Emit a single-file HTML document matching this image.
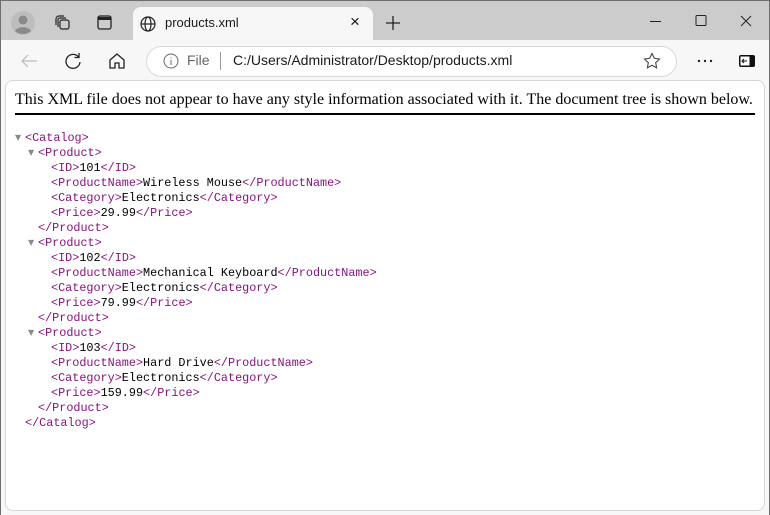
<!DOCTYPE html>
<html><head><meta charset="utf-8"><style>
*{margin:0;padding:0;box-sizing:border-box}
html,body{width:770px;height:515px;overflow:hidden}
body{background:#ccc;position:relative;font-family:"Segoe UI","Liberation Sans",sans-serif}
.win{position:absolute;left:0;top:0;width:770px;height:515px;border:1px solid #6e6e6e;border-bottom:none;background:#cccccc}
.tab{position:absolute;left:133px;top:7px;width:240px;height:34px;background:#f7f7f7;border-radius:8px 8px 0 0}
.tb{position:absolute;left:1px;top:40px;width:768px;height:475px;background:#f7f7f7}
.addr{position:absolute;left:146px;top:46px;width:531px;height:31px;background:#fff;border:1px solid #d9d9d9;border-radius:16px}
.card{position:absolute;left:5px;top:80px;width:760px;height:431px;background:#fff;border:1px solid #d6d6d6;border-radius:8px}
.t{position:absolute;font-size:13px;color:#1a1a1a;white-space:nowrap}
.hdr{position:absolute;left:15px;top:91px;font-family:"Liberation Serif",serif;font-size:16px;color:#000;white-space:nowrap}
.rule{position:absolute;left:15px;top:113px;width:740px;height:2px;background:#000}
.xml{position:absolute;left:0;top:131px;width:760px;font-family:"Liberation Mono",monospace;font-size:11.8px;line-height:15px;color:#000;white-space:nowrap}
.xml div{height:15px;position:relative}
.xml div>span{position:absolute;white-space:pre}
.g{color:#881280}
.tri{color:#8a8a8a;font-size:8px;line-height:15px;font-family:"DejaVu Sans",sans-serif;top:-1px}
</style></head><body>
<div class="win"></div>
<div class="tab"></div>
<div class="tb"></div>
<svg style="position:absolute;left:10px;top:10px" width="26" height="26"><circle cx="13" cy="13" r="12" fill="#bdbdbd"/><circle cx="13" cy="10" r="4.5" fill="#8a8a8a"/><path d="M5 21c2-5 14-5 16 0a12 12 0 0 1-16 0z" fill="#8a8a8a"/></svg>
<svg style="position:absolute;left:54px;top:14px" width="18" height="18" fill="none" stroke="#222" stroke-width="1.2"><rect x="6" y="6" width="9" height="9" rx="2"/><path d="M4 13V6a2 2 0 0 1 2-2h6M2 11V5a3 3 0 0 1 3-3h5"/></svg>
<svg style="position:absolute;left:96px;top:14px" width="18" height="18" fill="none" stroke="#222" stroke-width="1.3"><rect x="2" y="2" width="13" height="13" rx="2"/><path d="M2 4.5h13" stroke-width="3"/></svg>
<svg style="position:absolute;left:139px;top:15px" width="18" height="18" fill="none" stroke="#222" stroke-width="1.2"><circle cx="9" cy="9" r="7"/><ellipse cx="9" cy="9" rx="3" ry="7"/><path d="M2 9h14"/></svg>
<div class="t" style="left:165px;top:15px">products.xml</div>
<div class="t" style="left:350px;top:12px;font-size:17px">×</div>
<svg style="position:absolute;left:385px;top:15px" width="16" height="16" stroke="#222" stroke-width="1.3"><path d="M8 1v14M1 8h14"/></svg>
<svg style="position:absolute;left:650px;top:14px" width="110" height="14" fill="none" stroke="#222" stroke-width="1"><path d="M0 7.5h11"/><rect x="46" y="1.5" width="10" height="10" rx="1"/><path d="M91 2l10 10M101 2l-10 10"/></svg>
<svg style="position:absolute;left:20px;top:53px" width="18" height="16" fill="none" stroke="#bbb" stroke-width="1.2"><path d="M17 8H2M8 2L2 8l6 6"/></svg>
<svg style="position:absolute;left:64px;top:52px" width="18" height="18" fill="none" stroke="#222" stroke-width="1.3"><path d="M14.5 5A7 7 0 1 0 16 10"/><path d="M15 1v4.5h-4.5"/></svg>
<svg style="position:absolute;left:108px;top:52px" width="18" height="18" fill="none" stroke="#222" stroke-width="1.3"><path d="M2 8L9 2l7 6v8h-5v-5H7v5H2z"/></svg>
<div class="addr"></div>
<svg style="position:absolute;left:163px;top:53px" width="16" height="16" fill="none" stroke="#666" stroke-width="1"><circle cx="8" cy="8" r="7"/><path d="M8 7v5M8 4.5v1"/></svg>
<div class="t" style="left:187px;top:52px;color:#666;font-size:14px">File</div>
<div style="position:absolute;left:220px;top:52px;width:1px;height:18px;background:#999"></div>
<div class="t" style="left:233px;top:52px;font-size:14px">C:/Users/Administrator/Desktop/products.xml</div>
<svg style="position:absolute;left:643px;top:52px" width="18" height="18" fill="none" stroke="#444" stroke-width="1.1"><path d="M9 1.5l2.3 4.8 5.2.7-3.8 3.6.9 5.2L9 13.3l-4.6 2.5.9-5.2L1.5 7l5.2-.7z"/></svg>
<svg style="position:absolute;left:697px;top:59px" width="16" height="4" fill="#222"><circle cx="2" cy="2" r="1.2"/><circle cx="8" cy="2" r="1.2"/><circle cx="14" cy="2" r="1.2"/></svg>
<svg style="position:absolute;left:738px;top:53px" width="18" height="16"><rect x="1" y="2" width="16" height="12" rx="2" fill="#111"/><rect x="2.5" y="3.5" width="9" height="9" fill="#fff"/><path d="M9 8H4M6 6L4 8l2 2" stroke="#111" fill="none"/></svg>
<div class="card"></div>
<div class="hdr">This XML file does not appear to have any style information associated with it. The document tree is shown below.</div>
<div class="rule"></div>
<div class="xml"><div><span class="tri" style="left:15px">▼</span><span style="left:25px" class="g">&lt;Catalog&gt;</span></div><div><span class="tri" style="left:28px">▼</span><span style="left:38px" class="g">&lt;Product&gt;</span></div><div><span style="left:51px"><span class="g">&lt;ID&gt;</span>101<span class="g">&lt;/ID&gt;</span></span></div><div><span style="left:51px"><span class="g">&lt;ProductName&gt;</span>Wireless Mouse<span class="g">&lt;/ProductName&gt;</span></span></div><div><span style="left:51px"><span class="g">&lt;Category&gt;</span>Electronics<span class="g">&lt;/Category&gt;</span></span></div><div><span style="left:51px"><span class="g">&lt;Price&gt;</span>29.99<span class="g">&lt;/Price&gt;</span></span></div><div><span style="left:38px" class="g">&lt;/Product&gt;</span></div><div><span class="tri" style="left:28px">▼</span><span style="left:38px" class="g">&lt;Product&gt;</span></div><div><span style="left:51px"><span class="g">&lt;ID&gt;</span>102<span class="g">&lt;/ID&gt;</span></span></div><div><span style="left:51px"><span class="g">&lt;ProductName&gt;</span>Mechanical Keyboard<span class="g">&lt;/ProductName&gt;</span></span></div><div><span style="left:51px"><span class="g">&lt;Category&gt;</span>Electronics<span class="g">&lt;/Category&gt;</span></span></div><div><span style="left:51px"><span class="g">&lt;Price&gt;</span>79.99<span class="g">&lt;/Price&gt;</span></span></div><div><span style="left:38px" class="g">&lt;/Product&gt;</span></div><div><span class="tri" style="left:28px">▼</span><span style="left:38px" class="g">&lt;Product&gt;</span></div><div><span style="left:51px"><span class="g">&lt;ID&gt;</span>103<span class="g">&lt;/ID&gt;</span></span></div><div><span style="left:51px"><span class="g">&lt;ProductName&gt;</span>Hard Drive<span class="g">&lt;/ProductName&gt;</span></span></div><div><span style="left:51px"><span class="g">&lt;Category&gt;</span>Electronics<span class="g">&lt;/Category&gt;</span></span></div><div><span style="left:51px"><span class="g">&lt;Price&gt;</span>159.99<span class="g">&lt;/Price&gt;</span></span></div><div><span style="left:38px" class="g">&lt;/Product&gt;</span></div><div><span style="left:25px" class="g">&lt;/Catalog&gt;</span></div></div>
</body></html>
